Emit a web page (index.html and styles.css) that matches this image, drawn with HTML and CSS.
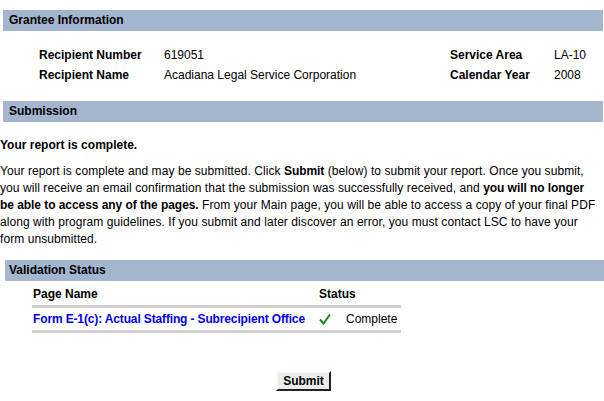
FILE: index.html
```html
<!DOCTYPE html>
<html>
<head>
<meta charset="utf-8">
<link rel="stylesheet" href="styles.css">
</head>
<body>
<div class="bar bar-grantee">Grantee Information</div>
<div class="info">
  <div class="info-row">
    <span class="lbl">Recipient Number</span><span class="val">619051</span>
    <span class="lbl lbl2">Service Area</span><span class="val2">LA-10</span>
  </div>
  <div class="info-row">
    <span class="lbl">Recipient Name</span><span class="val">Acadiana Legal Service Corporation</span>
    <span class="lbl lbl2">Calendar Year</span><span class="val2">2008</span>
  </div>
</div>
<div class="bar bar-sub">Submission</div>
<p class="complete">Your report is complete.</p>
<p class="desc">Your report is complete and may be submitted. Click <b>Submit</b> (below) to submit your report. Once you submit, you will receive an email confirmation that the submission was successfully received, and <b>you will no longer be able to access any of the pages.</b> From your Main page, you will be able to access a copy of your final PDF along with program guidelines. If you submit and later discover an error, you must contact LSC to have your form unsubmitted.</p>
<div class="bar bar-val">Validation Status</div>
<table class="vtable">
  <thead>
    <tr><th class="c1">Page Name</th><th class="c2">Status</th></tr>
  </thead>
  <tbody>
    <tr>
      <td class="c1"><a class="plink">Form E-1(c): Actual Staffing - Subrecipient Office</a></td>
      <td class="c2"><span class="stat"><svg class="check" width="12" height="12" viewBox="0 0 12 12"><path d="M1 6.5 L4.5 10.5 L11 1.5" fill="none" stroke="#138a13" stroke-width="2"/></svg>Complete</span></td>
    </tr>
  </tbody>
</table>
<div class="actions"><button class="submit">Submit</button></div>
</body>
</html>
```
FILE: styles.css
```css
html, body { margin: 0; padding: 0; background: #fff; }
body {
  font-family: "Liberation Sans", Arial, sans-serif;
  font-size: 12px;
  color: #000;
  width: 604px;
}
.bar {
  background: #a4b5ce;
  font-weight: bold;
  height: 21px;
  line-height: 21px;
  padding-left: 6px;
  margin-right: 1px;
}
.bar-grantee { margin-top: 10px; margin-left: 3px; }
.bar-sub { margin-left: 3px; }
.bar-val { margin-left: 5px; margin-right: 0; padding-left: 4px; }
.info { padding: 14px 0 16px 39px; }
.info-row { display: flex; height: 20px; line-height: 20px; font-size: 12px; }
.lbl { font-weight: bold; width: 125px; }
.val { width: 286px; }
.lbl2 { width: 104px; }
.complete { margin: 16px 0 0 0; font-weight: bold; line-height: 15px; }
.desc { margin: 10px 0 12px 0; max-width: 600px; line-height: 17px; letter-spacing: 0.07px; }
.desc b { letter-spacing: -0.06px; }
.vtable { margin: 2px 0 0 32px; border-collapse: collapse; width: 369px; }
.vtable th { text-align: left; font-weight: bold; height: 22px; padding: 0 0 0 1px; border-bottom: 3px solid #d0d0d0; }
.vtable td { height: 22px; padding: 0 0 0 1px; border-bottom: 3px solid #d0d0d0; }
.vtable .c2 { width: 82px; }
.plink { color: #0000ee; font-weight: bold; letter-spacing: -0.14px; }
.stat { display: flex; align-items: center; }
.check { margin-right: 15px; }
.actions { text-align: center; margin-top: 38px; }
.submit {
  font-family: "Liberation Sans", Arial, sans-serif;
  font-size: 12px;
  font-weight: bold;
  background: #ececec;
  border: 2px outset #ddd;
  border-top-color: #fafafa;
  border-left-color: #fafafa;
  border-right-color: #777;
  border-bottom-color: #777;
  padding: 1px 5px;
  margin-left: 3px;
  height: 20px;
}
```
